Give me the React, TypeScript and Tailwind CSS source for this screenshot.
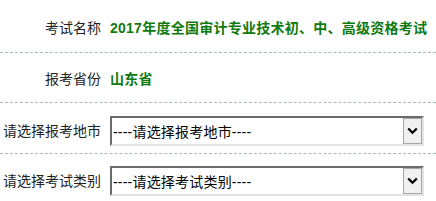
const font = { fontFamily: '"Liberation Sans", "Noto Sans CJK SC", sans-serif' };

const FakeSelect = ({ text }: { text: string }) => {
  return (
    <div className="flex h-[30px] w-[314px] border-t-2 border-l-2 border-b-2 border-r-2 border-t-[#6b6b6b] border-l-[#6b6b6b] border-b-[#e3e3e3] border-r-[#e3e3e3] bg-white">
      <span className="flex-1 pl-[1px] pt-[5px] text-[14px] leading-[18px] tracking-[0.2px] text-black">{text}</span>
      <div className="flex w-[19px] items-center justify-center border border-[#a6a6a6] bg-[#f0f0f0]">
        <svg width="11" height="8" viewBox="0 0 11 8">
          <path d="M1.2 1.5 L5.5 5.8 L9.8 1.5" fill="none" stroke="#000" strokeWidth="2.2" />
        </svg>
      </div>
    </div>
  );
};

const App = () => {
  return (
    <div className="w-[436px] h-[201px] overflow-hidden bg-white" style={font}>
      <div className="flex h-[53px] items-center border-b border-dashed border-[#a3bdbd] pt-[4px]">
        <div className="w-[101px] text-right text-[14px] text-[#222]">考试名称</div>
        <div className="ml-[9px] text-[14px] font-bold tracking-[0.25px] text-[#0f7a0f]">2017年度全国审计专业技术初、中、高级资格考试</div>
      </div>
      <div className="flex h-[50px] items-center border-b border-dashed border-[#a3bdbd] pt-[4px]">
        <div className="w-[101px] text-right text-[14px] text-[#222]">报考省份</div>
        <div className="ml-[9px] text-[14px] font-bold tracking-[0.25px] text-[#0f7a0f]">山东省</div>
      </div>
      <div className="flex h-[51px] items-center border-b border-dashed border-[#a3bdbd] pt-[6px]">
        <div className="w-[101px] text-right text-[14px] text-[#222]">请选择报考地市</div>
        <div className="ml-[9px]">
          <FakeSelect text="----请选择报考地市----" />
        </div>
      </div>
      <div className="flex h-[52px] items-center pt-[2px]">
        <div className="w-[101px] text-right text-[14px] text-[#222]">请选择考试类别</div>
        <div className="ml-[9px]">
          <FakeSelect text="----请选择考试类别----" />
        </div>
      </div>
    </div>
  );
};

export default App;
